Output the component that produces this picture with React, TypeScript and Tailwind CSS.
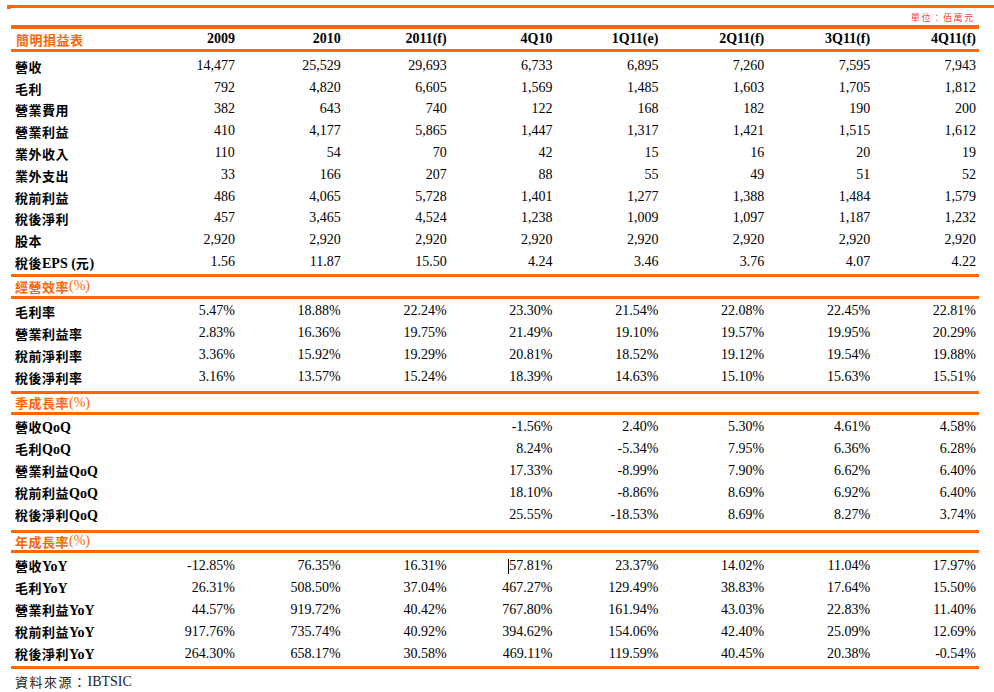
import React from 'react';

type Row = { label: string; values: string[]; caretCol?: number };

const SERIF = "font-['Liberation_Serif','Times_New_Roman',serif]";
const CJK = "font-['Noto_Sans_CJK_TC',sans-serif]";

const income: Row[] = [
  { label: '營收', values: ['14,477', '25,529', '29,693', '6,733', '6,895', '7,260', '7,595', '7,943'] },
  { label: '毛利', values: ['792', '4,820', '6,605', '1,569', '1,485', '1,603', '1,705', '1,812'] },
  { label: '營業費用', values: ['382', '643', '740', '122', '168', '182', '190', '200'] },
  { label: '營業利益', values: ['410', '4,177', '5,865', '1,447', '1,317', '1,421', '1,515', '1,612'] },
  { label: '業外收入', values: ['110', '54', '70', '42', '15', '16', '20', '19'] },
  { label: '業外支出', values: ['33', '166', '207', '88', '55', '49', '51', '52'] },
  { label: '稅前利益', values: ['486', '4,065', '5,728', '1,401', '1,277', '1,388', '1,484', '1,579'] },
  { label: '稅後淨利', values: ['457', '3,465', '4,524', '1,238', '1,009', '1,097', '1,187', '1,232'] },
  { label: '股本', values: ['2,920', '2,920', '2,920', '2,920', '2,920', '2,920', '2,920', '2,920'] },
  { label: '稅後EPS (元)', values: ['1.56', '11.87', '15.50', '4.24', '3.46', '3.76', '4.07', '4.22'] },
];

const margins: Row[] = [
  { label: '毛利率', values: ['5.47%', '18.88%', '22.24%', '23.30%', '21.54%', '22.08%', '22.45%', '22.81%'] },
  { label: '營業利益率', values: ['2.83%', '16.36%', '19.75%', '21.49%', '19.10%', '19.57%', '19.95%', '20.29%'] },
  { label: '稅前淨利率', values: ['3.36%', '15.92%', '19.29%', '20.81%', '18.52%', '19.12%', '19.54%', '19.88%'] },
  { label: '稅後淨利率', values: ['3.16%', '13.57%', '15.24%', '18.39%', '14.63%', '15.10%', '15.63%', '15.51%'] },
];

const qoq: Row[] = [
  { label: '營收QoQ', values: ['', '', '', '-1.56%', '2.40%', '5.30%', '4.61%', '4.58%'] },
  { label: '毛利QoQ', values: ['', '', '', '8.24%', '-5.34%', '7.95%', '6.36%', '6.28%'] },
  { label: '營業利益QoQ', values: ['', '', '', '17.33%', '-8.99%', '7.90%', '6.62%', '6.40%'] },
  { label: '稅前利益QoQ', values: ['', '', '', '18.10%', '-8.86%', '8.69%', '6.92%', '6.40%'] },
  { label: '稅後淨利QoQ', values: ['', '', '', '25.55%', '-18.53%', '8.69%', '8.27%', '3.74%'] },
];

const yoy: Row[] = [
  { label: '營收YoY', values: ['-12.85%', '76.35%', '16.31%', '57.81%', '23.37%', '14.02%', '11.04%', '17.97%'], caretCol: 3 },
  { label: '毛利YoY', values: ['26.31%', '508.50%', '37.04%', '467.27%', '129.49%', '38.83%', '17.64%', '15.50%'] },
  { label: '營業利益YoY', values: ['44.57%', '919.72%', '40.42%', '767.80%', '161.94%', '43.03%', '22.83%', '11.40%'] },
  { label: '稅前利益YoY', values: ['917.76%', '735.74%', '40.92%', '394.62%', '154.06%', '42.40%', '25.09%', '12.69%'] },
  { label: '稅後淨利YoY', values: ['264.30%', '658.17%', '30.58%', '469.11%', '119.59%', '40.45%', '20.38%', '-0.54%'] },
];

const columns = ['2009', '2010', '2011(f)', '4Q10', '1Q11(e)', '2Q11(f)', '3Q11(f)', '4Q11(f)'];

// CJK runs get the smaller spaced CJK face, the rest stays Times-like
const MixedText: React.FC<{ text: string; latinBold?: boolean }> = ({ text, latinBold = true }) => {
  const parts = text.split(/([\u3000-\u9fff\uff00-\uffef]+)/);
  return (
    <>
      {parts.map((p, i) =>
        i % 2 === 1 ? (
          <span key={i} className={`${CJK} text-[13px] tracking-[0.5px] font-bold`}>
            {p}
          </span>
        ) : p ? (
          <span key={i} className={`${SERIF} text-[14px] ${latinBold ? 'font-bold' : ''}`}>
            {p}
          </span>
        ) : null
      )}
    </>
  );
};

const OrangeLine: React.FC<{ h?: string }> = ({ h = 'h-[3px]' }) => <div className={`${h} bg-[#ff6600]`} />;

const DataRow: React.FC<{ row: Row; h: string }> = ({ row, h }) => (
  <div className={`grid grid-cols-[118px_repeat(8,1fr)] pr-[3px] items-center ${h} text-black`}>
    <div className="pl-[4px] whitespace-nowrap leading-none">
      <MixedText text={row.label} />
    </div>
    {row.values.map((v, i) => (
      <div key={i} className={`${SERIF} text-[14px] text-right leading-none`}>
        {row.caretCol === i ? (
          <span className="relative">
            <span className="absolute left-[-1px] top-[1px] w-px h-[15px] bg-black" />
            {v}
          </span>
        ) : (
          v
        )}
      </div>
    ))}
  </div>
);

const SectionHeader: React.FC<{ title: string; h: string }> = ({ title, h }) => (
  <div className={`flex items-center ${h} pl-[4px] text-[#ff6600] leading-none`}>
    <MixedText text={title} latinBold={false} />
  </div>
);

export default function App() {
  return (
    <div className="w-[994px] h-[692px] bg-white overflow-hidden pt-[5px]">
      {/* top rule */}
      <div className="ml-[7px] h-[3px] bg-[#ff6600]" />
      <div className="ml-[7px] w-[4px] h-px bg-[#ff6600]" />

      {/* unit */}
      <div className="h-[16px] flex items-center justify-end pr-[19px]">
        <span className={`${CJK} text-[9px] tracking-[1.7px] text-[#ff3b3b] leading-none`}>單位：佰萬元</span>
      </div>

      <div className="ml-[11px] w-[968px]">
        <OrangeLine h="h-[4px]" />
        {/* header */}
        <div className="grid grid-cols-[118px_repeat(8,1fr)] pr-[3px] items-center h-[20px]">
          <div className="pl-[5px] text-[#ff6600] leading-none whitespace-nowrap">
            <MixedText text="簡明損益表" />
          </div>
          {columns.map((c) => (
            <div key={c} className={`${SERIF} text-[14px] font-bold text-right text-black leading-none`}>
              {c}
            </div>
          ))}
        </div>
        <OrangeLine />

        <div className="pt-[3px] pb-[1px]">
          {income.map((r) => (
            <DataRow key={r.label} row={r} h="h-[21.8px]" />
          ))}
        </div>

        <OrangeLine />
        <SectionHeader title="經營效率(%)" h="h-[19px]" />
        <OrangeLine />
        <div className="pt-[1px] pb-[3px]">
          {margins.map((r) => (
            <DataRow key={r.label} row={r} h="h-[22px]" />
          ))}
        </div>

        <OrangeLine />
        <SectionHeader title="季成長率(%)" h="h-[18px]" />
        <OrangeLine />
        <div className="pt-[1px] pb-[4px]">
          {qoq.map((r) => (
            <DataRow key={r.label} row={r} h="h-[22px]" />
          ))}
        </div>

        <OrangeLine />
        <SectionHeader title="年成長率(%)" h="h-[17px]" />
        <OrangeLine />
        <div className="pt-[2px] pb-[1px]">
          {yoy.map((r) => (
            <DataRow key={r.label} row={r} h="h-[22px]" />
          ))}
        </div>
        <OrangeLine />

        {/* source */}
        <div className="h-[26px] flex items-center pl-[4px] text-[#222] leading-none">
          <span className={`${CJK} text-[13px] tracking-[1.5px]`}>資料來源：</span>
          <span className={`${SERIF} text-[14px]`}>IBTSIC</span>
        </div>
      </div>
    </div>
  );
}
